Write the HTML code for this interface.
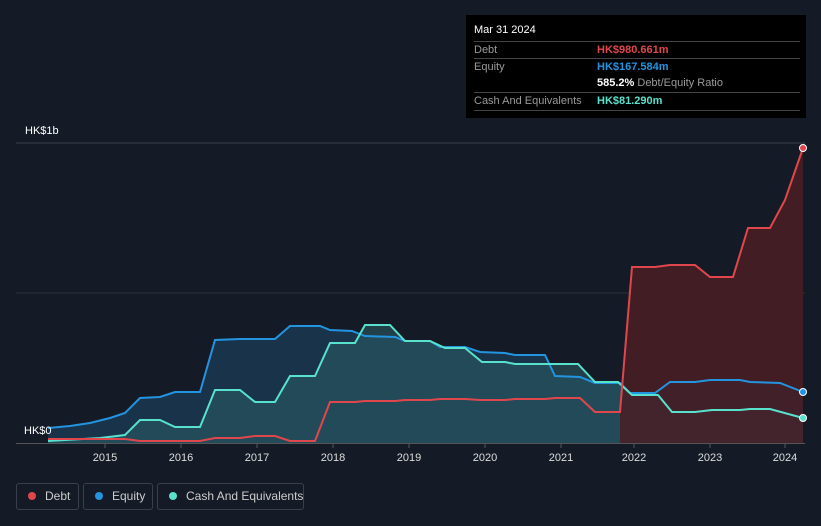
<!DOCTYPE html><html><head><style>
body{margin:0;width:821px;height:526px;background:#151b26;font-family:"Liberation Sans",sans-serif;overflow:hidden;position:relative}
.t{position:absolute;color:#fff;font-size:11px}
.tip{position:absolute;left:466px;top:15px;width:340px;height:103px;background:#000;}
.row{position:absolute;left:8px;width:326px;font-size:11px;color:#9a9a9a;border-top:1px solid #444;height:17px;line-height:17px}
.leg{position:absolute;top:483px;height:27px;border:1px solid #3a404b;border-radius:3px;color:#ccc;font-size:12px;line-height:25px;box-sizing:border-box;white-space:nowrap;overflow:hidden}
.leg i{display:inline-block;width:8px;height:8px;border-radius:50%;margin:0 9px 0 11px;vertical-align:0px}
</style></head><body>
<svg width="821" height="526" style="position:absolute;left:0;top:0">
<line x1="16" y1="143" x2="805" y2="143" stroke="#3a404b"/>
<line x1="16" y1="293" x2="805" y2="293" stroke="#2a303b"/>
<line x1="16" y1="443.5" x2="805" y2="443.5" stroke="#555"/>
<path d="M48,428 L70,426 90,423 110,418 125,413 140,398 160,397 175,392 200,392 215,340 240,339 275,339 290,326 320,326 330,330 352,331 365,336 395,337 405,341 430,341 440,347 465,347 480,352 505,353 515,355 545,355 555,376 580,377 595,383 620,383 630,393 655,393 670,382 695,382 710,380 740,380 750,382 780,383 803,392 L803,443 L48,443Z" fill="#1a3a55" opacity="0.8"/>
<path d="M48,441 L100,438 125,435 140,420 160,420 175,427 200,427 215,390 240,390 255,402 275,402 290,376 315,376 330,343 355,343 365,325 390,325 405,341 430,341 445,348 465,348 482,362 505,362 515,364 578,364 595,382 618,382 632,395 658,395 672,412 695,412 712,410 740,410 750,409 770,409 803,418 L803,443 L48,443Z" fill="#2a5a60" opacity="0.6"/>
<path d="M620,443 L620,412 632,267 655,267 670,265 695,265 710,277 733,277 748,228 770,228 785,200 803,148 L803,443Z" fill="#4a1d24" opacity="0.85"/>
<path d="M48,428 L70,426 90,423 110,418 125,413 140,398 160,397 175,392 200,392 215,340 240,339 275,339 290,326 320,326 330,330 352,331 365,336 395,337 405,341 430,341 440,347 465,347 480,352 505,353 515,355 545,355 555,376 580,377 595,383 620,383 630,393 655,393 670,382 695,382 710,380 740,380 750,382 780,383 803,392" fill="none" stroke="#2394df" stroke-width="2"/>
<path d="M48,441 L100,438 125,435 140,420 160,420 175,427 200,427 215,390 240,390 255,402 275,402 290,376 315,376 330,343 355,343 365,325 390,325 405,341 430,341 445,348 465,348 482,362 505,362 515,364 578,364 595,382 618,382 632,395 658,395 672,412 695,412 712,410 740,410 750,409 770,409 803,418" fill="none" stroke="#58e1cd" stroke-width="2"/>
<path d="M48,439 L125,439 140,441 200,441 215,438 240,438 255,436 275,436 290,441 315,441 330,402 355,402 365,401 395,401 405,400 430,400 440,399 465,399 480,400 505,400 515,399 545,399 555,398 580,398 595,412 620,412 632,267 655,267 670,265 695,265 710,277 733,277 748,228 770,228 785,200 803,148" fill="none" stroke="#e0474c" stroke-width="2"/>
<circle cx="803" cy="148" r="3.5" fill="#e0474c" stroke="#fff" stroke-width="1"/>
<circle cx="803" cy="392" r="3.5" fill="#2394df" stroke="#fff" stroke-width="1"/>
<circle cx="803" cy="418" r="3.5" fill="#58e1cd" stroke="#fff" stroke-width="1"/>
<g stroke="#555"><line x1="105" y1="443" x2="105" y2="448"/><line x1="181" y1="443" x2="181" y2="448"/><line x1="257" y1="443" x2="257" y2="448"/><line x1="333" y1="443" x2="333" y2="448"/><line x1="409" y1="443" x2="409" y2="448"/><line x1="485" y1="443" x2="485" y2="448"/><line x1="561" y1="443" x2="561" y2="448"/><line x1="634" y1="443" x2="634" y2="448"/><line x1="710" y1="443" x2="710" y2="448"/><line x1="785" y1="443" x2="785" y2="448"/></g>
<g fill="#ddd" font-size="11" text-anchor="middle" font-family="Liberation Sans"><text x="105" y="461">2015</text><text x="181" y="461">2016</text><text x="257" y="461">2017</text><text x="333" y="461">2018</text><text x="409" y="461">2019</text><text x="485" y="461">2020</text><text x="561" y="461">2021</text><text x="634" y="461">2022</text><text x="710" y="461">2023</text><text x="785" y="461">2024</text></g>
</svg>
<div class="t" style="left:25px;top:125px">HK$1b</div>
<div class="t" style="left:24px;top:425px">HK$0</div>
<div class="tip">
<div style="position:absolute;left:8px;top:9px;color:#fff;font-size:11px">Mar 31 2024</div>
<div class="row" style="top:26px">Debt<span style="position:absolute;left:123px;color:#e0474c;font-weight:bold">HK$980.661m</span></div>
<div class="row" style="top:43px">Equity<span style="position:absolute;left:123px;color:#2394df;font-weight:bold">HK$167.584m</span></div>
<div class="row" style="top:60px;border:0"><span style="position:absolute;left:123px;color:#fff;font-weight:bold">585.2%<span style="color:#9a9a9a;font-weight:normal"> Debt/Equity Ratio</span></span></div>
<div class="row" style="top:77px;border-bottom:1px solid #444">Cash And Equivalents<span style="position:absolute;left:123px;color:#58e1cd;font-weight:bold">HK$81.290m</span></div>
</div>
<div class="leg" style="left:16px;width:63px"><i style="background:#e0474c"></i>Debt</div>
<div class="leg" style="left:83px;width:70px"><i style="background:#2394df"></i>Equity</div>
<div class="leg" style="left:157px;width:147px"><i style="background:#58e1cd"></i>Cash And Equivalents</div>
</body></html>
